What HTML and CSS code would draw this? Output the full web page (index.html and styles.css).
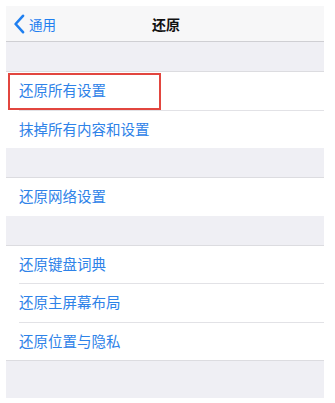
FILE: index.html
```html
<!DOCTYPE html>
<html lang="zh">
<head>
<meta charset="utf-8">
<link rel="stylesheet" href="styles.css">
</head>
<body>
<div class="screen">
  <div class="nav">
    <div class="back">
      <svg class="chev" width="12" height="20" viewBox="0 0 12 20"><path d="M10 1.8 L2.6 10 L10 18.2" fill="none" stroke="#1f7ff0" stroke-width="2.6" stroke-linecap="round" stroke-linejoin="round"/></svg>
      <span>通用</span>
    </div>
    <div class="title">还原</div>
  </div>
  <div class="gap"></div>
  <div class="group">
    <div class="row first"><span>还原所有设置</span><div class="mark"></div></div>
    <div class="row"><span>抹掉所有内容和设置</span></div>
  </div>
  <div class="gap"></div>
  <div class="group">
    <div class="row"><span>还原网络设置</span></div>
  </div>
  <div class="gap"></div>
  <div class="group">
    <div class="row"><span>还原键盘词典</span></div>
    <div class="row"><span>还原主屏幕布局</span></div>
    <div class="row"><span>还原位置与隐私</span></div>
  </div>
  <div class="tail"></div>
</div>
</body>
</html>
```
FILE: styles.css
```css
html, body {
  margin: 0;
  padding: 0;
  background: #ffffff;
}
body {
  padding: 6px 11px 0 6px;
  font-family: "Noto Sans CJK SC", "Noto Sans", sans-serif;
}
.screen {
  width: 318px;
  background: #efeff4;
}
.nav {
  height: 35px;
  background: #f7f7f8;
  border-bottom: 1px solid #cfcfd3;
  position: relative;
  display: flex;
  align-items: center;
  justify-content: center;
}
.back {
  position: absolute;
  left: 7px;
  top: 0;
  height: 35px;
  display: flex;
  align-items: center;
  gap: 4px;
  color: #1f7ff0;
  font-size: 13.5px;
}
.chev {
  display: block;
}
.title {
  font-size: 14px;
  font-weight: 600;
  color: #111;
  margin-left: 2px;
}
.gap {
  height: 29px;
  border-bottom: 1px solid #dcdce0;
}
.group {
  background: #fff;
}
.row {
  height: 37.5px;
  margin-left: 13px;
  border-bottom: 1px solid #e2e2e6;
  display: flex;
  align-items: center;
  position: relative;
  font-size: 14.5px;
  color: #2e82e8;
}
.row:last-child {
  border-bottom: none;
  margin-left: 0;
  padding-left: 13px;
}
.row span {
  position: relative;
  top: -1px;
}
.mark {
  position: absolute;
  left: -11px;
  top: 1px;
  width: 149px;
  height: 33px;
  border: 2px solid #e2463f;
}
.tail {
  height: 37px;
  border-top: 1px solid #dcdce0;
}
```
